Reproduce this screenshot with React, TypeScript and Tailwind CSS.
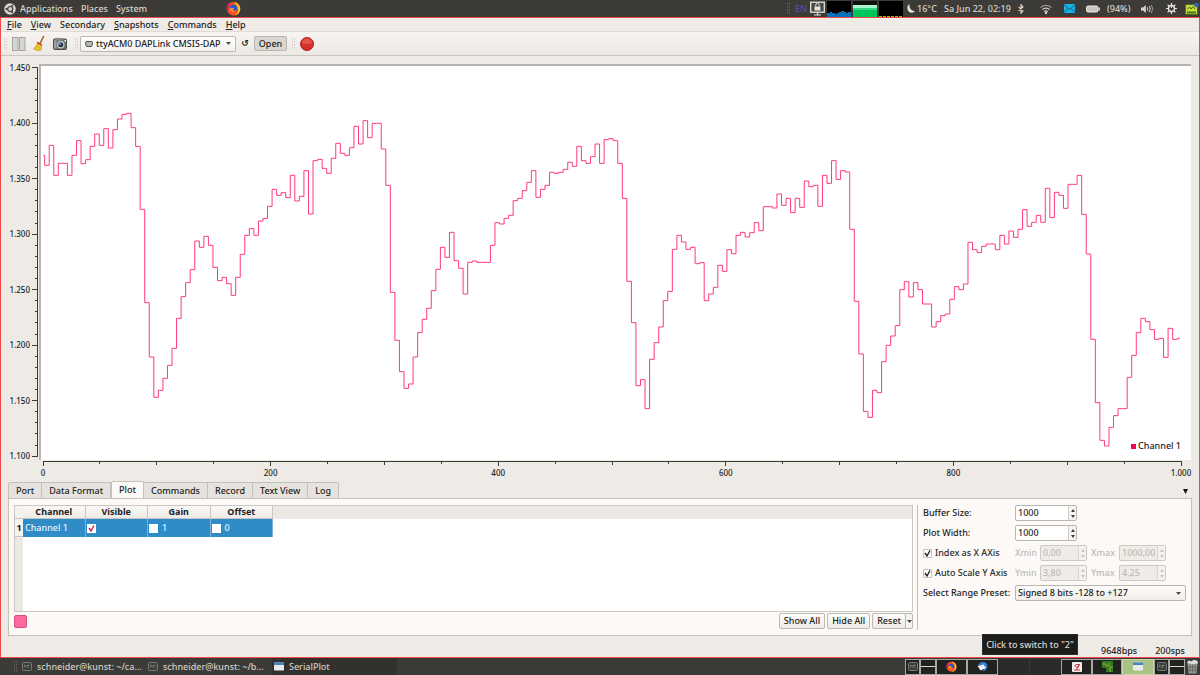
import type { ReactNode } from "react";

// Step levels of channel 1, four samples each, in plot units (y grows downwards).
const LEVELS = [
  286, 316, 256, 346, 310, 310, 346, 286, 242, 311, 299, 259, 222, 256, 206, 264, 209, 177, 163, 160,
  203, 259, 448, 728, 891, 1012, 991, 955, 916, 865, 775, 710, 668, 629, 543, 562, 529, 556, 622, 662,
  652, 671, 706, 652, 583, 526, 506, 526, 483, 475, 439, 388, 406, 398, 413, 346, 423, 409, 332, 462,
  302, 298, 325, 340, 295, 250, 280, 286, 263, 199, 252, 182, 233, 190, 190, 267, 376, 697, 841, 935,
  985, 972, 891, 818, 778, 745, 692, 628, 562, 592, 517, 602, 625, 702, 607, 603, 607, 607, 607, 556,
  488, 492, 475, 466, 422, 415, 392, 367, 332, 412, 388, 376, 337, 340, 337, 328, 307, 319, 259, 302,
  310, 290, 252, 310, 239, 236, 242, 310, 415, 664, 788, 977, 959, 1046, 898, 848, 801, 722, 694, 568,
  526, 546, 568, 562, 611, 608, 722, 702, 682, 616, 634, 569, 581, 526, 517, 531, 518, 488, 512, 440,
  440, 444, 402, 436, 415, 458, 415, 442, 363, 380, 376, 439, 346, 370, 302, 358, 332, 336, 508, 724,
  882, 1054, 1072, 991, 998, 905, 856, 828, 797, 689, 665, 711, 668, 689, 732, 732, 801, 785, 767, 762,
  718, 680, 689, 672, 547, 569, 578, 559, 552, 552, 569, 526, 552, 513, 532, 508, 449, 499, 487, 466,
  487, 385, 473, 397, 406, 445, 373, 373, 346, 463, 582, 838, 1028, 1141, 1158, 1102, 1067, 1046, 1046,
  952, 886, 818, 775, 785, 809, 838, 835, 892, 805, 838, 835,
];
const FIRST_STEP = 11;
const STEP = 13.645;

const tracePath = LEVELS.map((y, i) => {
  const from = i === 0 ? 7 : FIRST_STEP + (i - 1) * STEP;
  const to = i === LEVELS.length - 1 ? 3417 : FIRST_STEP + i * STEP;
  return `${i === 0 ? "M" : "L"}${from} ${y}L${to} ${y}`;
}).join("");

const Y_LABELS = ["1.450", "1.400", "1.350", "1.300", "1.250", "1.200", "1.150", "1.100"];
const X_LABELS = ["0", "200", "400", "600", "800", "1.000"];
const MENU = ["File", "View", "Secondary", "Snapshots", "Commands", "Help"];
const TABS = ["Port", "Data Format", "Plot", "Commands", "Record", "Text View", "Log"];

function Grip({ dark = false }: { dark?: boolean }) {
  return (
    <svg className="h-3 w-1 shrink-0" viewBox="0 0 4 12" fill={dark ? "#66655f" : "#cfccc7"}>
      {[0, 3, 6, 9].map((y) => (
        <g key={y}>
          <rect x="0" y={y} width="1" height="1.5" />
          <rect x="2" y={y} width="1" height="1.5" />
        </g>
      ))}
    </svg>
  );
}

function Firefox({ className }: { className: string }) {
  return (
    <svg className={className} viewBox="0 0 16 16">
      <circle cx="8" cy="8.3" r="7.2" fill="#ff4a28" />
      <path d="M8.5 0.8c4 1 6.800 4 6.700 7.800-.1 4-3.200 6.900-7 6.900 3-1 5-3.500 4.800-6.500-.2-3-2-5.200-4.500-8.200z" fill="#ffc41f" />
      <path d="M1 5.500C1.600 3.800 2.500 2.500 3.300 1.800c.2 1 .6 1.500 1.200 1.900l-2 8C1.300 10 .6 8 1 5.500z" fill="#e0216e" />
      <circle cx="7.900" cy="7.900" r="3.900" fill="#2358c9" />
      <path d="M4 7.500c1.500-.8 3 .1 4.500 0 .6.800-.6 1.500-1.400 1.800.8 1.300 2.400 1.200 3.900.7-1 2.700-5.800 2.600-7.200-.3z" fill="#ff8a1c" />
    </svg>
  );
}

function Terminal() {
  return (
    <svg className="h-[9px] w-[10px] shrink-0" viewBox="0 0 10 9">
      <rect x="0.500" y="0.500" width="9" height="8" rx="1" fill="#3a3f3d" stroke="#777a76" />
      <path d="M2 3l1.500 1L2 5M4.500 3.500h3M4.500 5h2" stroke="#8fa097" strokeWidth="0.700" fill="none" />
    </svg>
  );
}

function WindowIcon() {
  return (
    <svg className="h-[9px] w-[10px] shrink-0" viewBox="0 0 10 9">
      <rect x="0" y="0.500" width="10" height="8" rx="0.800" fill="#e9ebe8" />
      <rect x="0" y="0.500" width="10" height="2.500" fill="#4682c4" />
    </svg>
  );
}

function TopBar() {
  return (
    <header className="flex h-[17px] shrink-0 items-center bg-[#3c3b37] pl-1 text-[#d8d4cb]">
      <svg className="mr-1 h-3 w-3" viewBox="0 0 12 12">
        <circle cx="6" cy="6" r="5.800" fill="#d8d4cb" />
        <circle cx="6.200" cy="6" r="2.500" fill="none" stroke="#3c3b37" strokeWidth="1.200" />
        <circle cx="2.400" cy="6" r="1" fill="#3c3b37" />
        <circle cx="8.200" cy="2.700" r="1" fill="#3c3b37" />
        <circle cx="8.200" cy="9.300" r="1" fill="#3c3b37" />
      </svg>
      <nav className="flex w-[126px] gap-2">
        <a href="#applications">Applications</a>
        <a href="#places">Places</a>
        <a href="#system">System</a>
      </nav>
      <a href="#firefox" aria-label="Firefox" className="ml-20">
        <Firefox className="h-[15px] w-[15px]" />
      </a>
      <div className="ml-auto flex h-full items-center">
        <Grip dark />
        <span className="ml-1 w-3 text-[#4d52a8]">EN</span>
        <svg className="ml-[3px] h-[15px] w-[15px]" viewBox="0 0 15 15">
          <rect x="0.700" y="1.200" width="13.600" height="10" fill="#4a4945" stroke="#e6e3dc" strokeWidth="1.300" />
          <rect x="4.500" y="5.500" width="6" height="4" fill="#e6e3dc" />
          <path d="M5.700 5.500V4.200a1.800 1.800 0 013.600 0v1.300" stroke="#e6e3dc" fill="none" />
          <path d="M7.500 11v2.500M4 14h7" stroke="#e6e3dc" strokeWidth="1.200" />
        </svg>
        <svg className="ml-[2px] h-4 w-6" viewBox="0 0 24 16">
          <rect width="24" height="16" fill="#000" />
          <path d="M0 12h3v-1h2v1h3v1h2v-1h2v-1h2v-1h3v1h2v1h2v-1h3v5H0z" fill="#0a72b8" />
        </svg>
        <svg className="ml-[2px] h-4 w-6" viewBox="0 0 24 16">
          <rect width="24" height="16" fill="#10120f" />
          <rect y="4" width="24" height="3" fill="#a8f7cd" />
          <rect y="7" width="24" height="2" fill="#3bd885" />
          <rect y="9" width="24" height="7" fill="#00c45c" />
        </svg>
        <svg className="ml-[2px] h-4 w-6" viewBox="0 0 24 16">
          <rect width="24" height="16" fill="#000" />
          <path d="M0 15.500h24" stroke="#b5a800" strokeDasharray="3 1" />
        </svg>
        <svg className="ml-1 h-[9px] w-2" viewBox="0 0 8 9" fill="#e6e3dc">
          <path d="M2.500 0C0 1.200-.3 5 1.500 7.300 3.300 9.400 6.500 9.200 8 7 5.500 7.300 1.800 5 2.500 0z" />
        </svg>
        <span className="ml-[2px] w-[22px]">16°C</span>
        <span className="ml-[5px] w-[67px] whitespace-nowrap">Sa Jun 22, 02:19</span>
        <svg className="ml-[7px] h-[10px] w-[6px]" viewBox="0 0 6 10" fill="none" stroke="#d8d4cb" strokeWidth="1.100">
          <path d="M0.500 2.800L5 7 3 9.300V.7L5 3 .5 7.200" />
        </svg>
        <svg className="ml-4 h-[10px] w-3" viewBox="0 0 12 10" fill="none" stroke="#d8d4cb" strokeWidth="1.200">
          <path d="M0.600 3.700a7.500 7.500 0 0110.800 0" opacity="0.600" />
          <path d="M2.400 5.700a5 5 0 017.200 0M4.200 7.600a2.500 2.500 0 013.600 0" />
          <circle cx="6" cy="9" r="0.600" fill="#d8d4cb" />
        </svg>
        <svg className="ml-3 h-[9px] w-[11px]" viewBox="0 0 11 9">
          <rect width="11" height="9" fill="#19b1ea" />
          <path d="M0 .8l5.500 4.700L11 .8M0 8.500l4-4M11 8.500l-4-4" stroke="#23556e" fill="none" />
        </svg>
        <svg className="ml-[11px] h-2 w-[14px]" viewBox="0 0 14 8">
          <rect x="0.500" y="1" width="11.500" height="6" rx="1.500" fill="#c9c5bd" stroke="#efece5" />
          <rect x="12.500" y="2.500" width="1.500" height="3" fill="#d8d4cb" />
        </svg>
        <span className="ml-[7px] w-[26px]">(94%)</span>
        <svg className="ml-2 h-[10px] w-[13px]" viewBox="0 0 13 10" fill="none" stroke="#d8d4cb">
          <path d="M0 3.500h2L4.800 1v8L2 6.500H0z" fill="#d8d4cb" stroke="none" />
          <path d="M6.300 3.300q1 1.700 0 3.400M8.300 2q2 3 0 6" />
          <path d="M10.300 1q3 4 0 8" opacity="0.600" />
        </svg>
        <svg className="ml-3 h-[11px] w-[11px]" viewBox="0 0 11 11" fill="none" stroke="#e6e3dc">
          <circle cx="5.500" cy="5.500" r="3" strokeWidth="1.400" />
          <path d="M5.500 0v5M5.500 9v2M0 5.500h2.500M8.500 5.500H11M1.600 1.600l1.700 1.700M7.700 7.700l1.700 1.700M9.400 1.600L7.700 3.300M3.300 7.700L1.600 9.400" strokeWidth="1.200" />
        </svg>
        <svg className="mr-px ml-2 h-[13px] w-[14px]" viewBox="0 0 14 13">
          <rect x="0.500" y="2.500" width="12" height="10" rx="1" fill="#c5d93a" stroke="#4d6d1f" />
          <path d="M2 9.500h9v2H2z" fill="#3f7d22" />
          <path d="M2.500 7l2-2 1.500 2 2-2.500 2 2.500" stroke="#436b12" fill="none" />
          <circle cx="11.500" cy="3" r="2.300" fill="#2d65b5" />
        </svg>
      </div>
    </header>
  );
}

function MenuBar() {
  return (
    <nav className="flex h-[14px] shrink-0 items-center gap-[9px] border-b border-[#dedbd6] bg-[#efebe7] px-[6px]">
      {MENU.map((item) => (
        <button key={item} type="button" className="whitespace-nowrap">
          {item === "Secondary" ? item : <><span className="underline">{item[0]}</span>{item.slice(1)}</>}
        </button>
      ))}
    </nav>
  );
}

function Toolbar() {
  return (
    <div className="flex h-6 shrink-0 items-center border-b border-[#c9c5c0] bg-linear-to-b from-[#f7f4f1] to-[#ece8e4] pl-[3px]">
      <Grip />
      <button type="button" aria-label="Pause" className="ml-1">
        <svg className="h-[14px] w-[14px]" viewBox="0 0 14 14">
          <rect x="0.500" y="0.500" width="5.500" height="13" fill="#d3d6d2" stroke="#a3a5a1" />
          <rect x="7.500" y="0.500" width="5.500" height="13" fill="#d3d6d2" stroke="#a3a5a1" />
        </svg>
      </button>
      <button type="button" aria-label="Clear" className="ml-[7px]">
        <svg className="h-[15px] w-3" viewBox="0 0 12 15">
          <path d="M10.500 0.700L7.300 7" stroke="#9a6b25" strokeWidth="1.600" strokeLinecap="round" />
          <path d="M4.500 6l4.300 2.200-.8 5.800c-2 1-5.500.2-7.500-1.200C2.700 11.500 4 9 4.500 6z" fill="#f1cf3b" stroke="#b8911a" strokeWidth="0.700" />
          <path d="M4.500 6l4.300 2.200-.4 1.500L4 7.500z" fill="#c8423a" />
          <path d="M5 9.500L3 13M7 10l-1.500 3.800" stroke="#b8911a" strokeWidth="0.600" />
        </svg>
      </button>
      <button type="button" aria-label="Snapshot" className="ml-2">
        <svg className="h-3 w-[14px]" viewBox="0 0 14 12">
          <rect x="0.500" y="1" width="13" height="10.500" rx="1" fill="#6a6f70" stroke="#4a4e4f" />
          <rect x="2" y="0" width="8" height="2.500" fill="#85898a" />
          <rect x="1" y="2.500" width="2.500" height="8" fill="#9da1a2" />
          <circle cx="7.800" cy="6.800" r="3.700" fill="#c8cccd" />
          <circle cx="7.800" cy="6.800" r="2.500" fill="#26384a" />
          <circle cx="7" cy="6" r="0.900" fill="#8bb2d4" />
          <rect x="11.500" y="2" width="1.500" height="1.500" fill="#fff" />
        </svg>
      </button>
      <span className="ml-2 flex"><Grip /></span>
      <label className="ml-px flex h-4 w-[156px] items-center rounded-[2px] border border-[#bcb8b2] bg-linear-to-b from-white to-[#f3f1ee] pr-1 pl-1">
        <svg className="h-[6px] w-2 shrink-0" viewBox="0 0 8 6">
          <path d="M0.500 1.500Q.5.500 1.500.5h5q1 0 1 1L7 4.500q-.2 1-1 1H2q-.8 0-1-1z" fill="#b5b5b3" stroke="#4d4d4b" />
        </svg>
        <select aria-label="Serial port" className="ml-[3px] min-w-0 flex-1 appearance-none bg-transparent">
          <option>ttyACM0 DAPLink CMSIS-DAP</option>
        </select>
        <Arrow />
      </label>
      <button type="button" aria-label="Reload ports" className="ml-[5px] w-2 font-['DejaVu_Sans',sans-serif] leading-none font-bold">↺</button>
      <button type="button" className="ml-[5px] h-[15px] w-[33px] rounded-[2px] border border-[#b9b5b0] bg-[#dad7d3]">Open</button>
      <span className="ml-[5px] flex"><Grip /></span>
      <button type="button" aria-label="Record" className="ml-1">
        <svg className="h-[14px] w-[14px]" viewBox="0 0 14 14">
          <circle cx="7" cy="7" r="6.500" fill="#d5302c" stroke="#a92222" />
          <path d="M2 6a5 4.500 0 0110 0q-5 2-10 0z" fill="#e56460" opacity="0.700" />
        </svg>
      </button>
    </div>
  );
}

function Arrow() {
  return (
    <svg className="pointer-events-none h-[3px] w-[5px] shrink-0" viewBox="0 0 5 3">
      <path d="M0 0h5L2.500 3z" fill="#4a4a48" />
    </svg>
  );
}

function Plot() {
  return (
    <section className="flex min-h-0 flex-1 flex-col pt-2 pr-2 pl-2">
      <div className="flex min-h-0 flex-1">
        <div className="flex w-[21px] shrink-0 flex-col justify-between text-right text-[8px] leading-[8px]">
          {Y_LABELS.map((label) => <span key={label}>{label}</span>)}
        </div>
        <div className="ml-[2px] w-[7px] shrink-0 pt-[2px]">
          <svg className="block h-full w-full" viewBox="0 18 7 1182" preserveAspectRatio="none" stroke="#3b3a38" fill="none">
            <g shapeRendering="crispEdges">
              <path d="M5.500 23V1189" vectorEffect="non-scaling-stroke" />
              {Array.from({ length: 36 }, (_, i) => (
                <path key={i} d={`M${i % 5 === 0 ? 0 : 3} ${23 + i * 33.3}H5.500`} vectorEffect="non-scaling-stroke" />
              ))}
            </g>
          </svg>
        </div>
        <div className="grid min-w-0 flex-1 grid-cols-1 grid-rows-[minmax(0,1fr)] border-t-2 border-l-2 border-[#b9b4b0] bg-white">
          <svg className="col-start-1 row-start-1 h-full w-full" viewBox="0 18 3450 1182" preserveAspectRatio="none">
            <path d={tracePath} fill="none" stroke="#ff3a7b" strokeWidth="1" vectorEffect="non-scaling-stroke" />
          </svg>
          <div className="col-start-1 row-start-1 flex items-center gap-[2px] self-end justify-self-end pr-[10px] pb-2">
            <span className="h-[5px] w-[5px] bg-[#ff0055]" />
            <span>Channel 1</span>
          </div>
        </div>
      </div>
      <div className="mr-[10px] ml-[34px] pt-px">
        <svg className="block h-[5px] w-full overflow-visible" viewBox="0 0 1000 5" preserveAspectRatio="none" stroke="#3b3a38" fill="none">
          <g shapeRendering="crispEdges">
            <path d="M0 .5H1000" vectorEffect="non-scaling-stroke" />
            {Array.from({ length: 21 }, (_, i) => (
              <path key={i} d={`M${i * 50} 0V${i % 4 === 0 ? 5 : i % 2 === 0 ? 4 : 3}`} vectorEffect="non-scaling-stroke" />
            ))}
          </g>
        </svg>
        <div className="flex justify-between pt-[3px] text-[8px] leading-[8px]">
          {X_LABELS.map((label) => <span key={label} className="flex w-0 justify-center">{label}</span>)}
        </div>
      </div>
    </section>
  );
}

function TabBar() {
  return (
    <div className="flex shrink-0 items-end px-[7px] pt-1">
      <div role="tablist" className="flex items-end">
        {TABS.map((tab) =>
          tab === "Plot" ? (
            <button key={tab} role="tab" aria-selected="true" type="button" className="-mb-px h-[18px] rounded-t-[2px] border border-b-0 border-[#c4c0bb] bg-[#fcf9f6] px-[7px] pb-px">{tab}</button>
          ) : (
            <button key={tab} role="tab" aria-selected="false" type="button" className="h-4 border border-b-0 border-l-0 border-[#c4c0bb] bg-[#e6e3df] px-[7px] whitespace-nowrap first:rounded-tl-[2px] first:border-l last:rounded-tr-[2px]">{tab}</button>
          ),
        )}
      </div>
      <button type="button" aria-label="Hide panel" className="mr-1 mb-1 ml-auto">
        <svg className="h-[5px] w-[5px]" viewBox="0 0 5 5"><path d="M0 0h5L2.500 5z" fill="#111" /></svg>
      </button>
    </div>
  );
}

function CellCheck({ checked = false, label }: { checked?: boolean; label: string }) {
  return (
    <span className="grid h-[9px] w-[9px] shrink-0">
      <input type="checkbox" defaultChecked={checked} aria-label={label} className="peer col-start-1 row-start-1 h-[9px] w-[9px] appearance-none bg-white" />
      <svg className="pointer-events-none invisible col-start-1 row-start-1 h-[9px] w-[9px] peer-checked:visible" viewBox="0 0 9 9">
        <path d="M2 4l2 3 3-5.500" fill="none" stroke="#e5114f" strokeWidth="1.400" />
      </svg>
    </span>
  );
}

function ChannelTable() {
  const head = "h-[13px] border-r border-b border-[#c9c5c0] bg-linear-to-b from-[#faf8f6] to-[#eeebe7] p-0 text-center font-bold";
  const cell = "h-[18px] border-r border-[#7fb2d8] bg-[#308cc6] p-0 text-[#e9f4fb]";
  return (
    <div className="flex h-[107px] flex-col border border-[#cbc7c2] bg-white">
      <div className="bg-linear-to-b from-[#ece9e4] from-[13px] to-white to-[13px]">
        <table className="w-[258px] table-fixed border-separate border-spacing-0">
          <thead>
            <tr>
              <th className="w-2 border-b border-[#c9c5c0] bg-[#f4f2ef] p-0" />
              <th className={head}>Channel</th>
              <th className={head}>Visible</th>
              <th className={head}>Gain</th>
              <th className={head}>Offset</th>
            </tr>
          </thead>
          <tbody>
            <tr>
              <th scope="row" className="border-b border-[#c9c5c0] bg-[#f4f2ef] p-0 text-center font-bold text-[#111]">1</th>
              <td className={cell}><span className="pl-[2px]">Channel 1</span></td>
              <td className={cell}><div className="pl-px"><CellCheck checked label="Channel 1 visible" /></div></td>
              <td className={cell}><div className="flex items-center gap-1 pl-px"><CellCheck label="Use gain" />1</div></td>
              <td className={cell}><div className="flex items-center gap-1 pl-px"><CellCheck label="Use offset" />0</div></td>
            </tr>
          </tbody>
        </table>
      </div>
      <div className="w-2 flex-1 bg-[#ece9e4]" />
    </div>
  );
}

function SmallButton({ children }: { children: ReactNode }) {
  return (
    <button type="button" className="h-4 rounded-[2px] border border-[#bcb8b3] bg-linear-to-b from-[#fdfcfb] to-[#efece8] px-1 whitespace-nowrap">
      {children}
    </button>
  );
}

function Spin({ label, value, off = false, wide = false }: { label: string; value: string; off?: boolean; wide?: boolean }) {
  return (
    <span className={`flex h-4 shrink-0 overflow-hidden rounded-[2px] border ${wide ? "w-[62px]" : "w-[47px]"} ${off ? "border-[#cdc9c4] bg-[#efece8]" : "border-[#b9b5b0] bg-white"}`}>
      <input
        aria-label={label}
        defaultValue={value}
        disabled={off}
        className={`min-w-0 flex-1 bg-transparent pl-[2px] ${off ? "text-[#bdbab6]" : "text-[#2b2b2b]"}`}
      />
      <span className={`flex w-2 flex-col items-center justify-center gap-[3px] border-l ${off ? "border-[#d8d4d0] bg-[#f5f2ef] text-[#c9c6c2]" : "border-[#cdc9c4] bg-[#f7f5f2] text-[#3f3f3d]"}`}>
        <button type="button" disabled={off} aria-label={`${label} up`}>
          <svg className="block h-[3px] w-[4px]" viewBox="0 0 4 3"><path d="M0 3h4L2 0z" fill="currentColor" /></svg>
        </button>
        <button type="button" disabled={off} aria-label={`${label} down`}>
          <svg className="block h-[3px] w-[4px]" viewBox="0 0 4 3"><path d="M0 0h4L2 3z" fill="currentColor" /></svg>
        </button>
      </span>
    </span>
  );
}

function Option({ children }: { children: ReactNode }) {
  return (
    <label className="flex w-[92px] shrink-0 items-center gap-[3px] whitespace-nowrap">
      <span className="grid h-[9px] w-[9px] shrink-0">
        <input type="checkbox" defaultChecked className="peer col-start-1 row-start-1 h-[9px] w-[9px] appearance-none rounded-[1px] border border-[#c4c0bb] bg-white" />
        <svg className="pointer-events-none invisible col-start-1 row-start-1 h-[9px] w-[9px] peer-checked:visible" viewBox="0 0 9 9">
          <path d="M2 4l2 3 3-5.500" fill="none" stroke="#222" strokeWidth="1.400" />
        </svg>
      </span>
      {children}
    </label>
  );
}

function PlotPanel() {
  return (
    <div className="mx-[7px] flex h-[138px] shrink-0 border border-[#c4c0bb] bg-[#fcf9f6] px-[5px] pt-[6px] pb-[5px]">
      <div className="flex min-w-0 flex-1 flex-col gap-px">
        <ChannelTable />
        <div className="flex items-center gap-[2px]">
          <button type="button" aria-label="Channel colour" className="mr-auto h-[13px] w-[13px] rounded-[2px] border border-[#d94f82] bg-[#fb6a9e]" />
          <SmallButton>Show All</SmallButton>
          <SmallButton>Hide All</SmallButton>
          <span className="flex">
            <SmallButton>Reset</SmallButton>
            <button type="button" aria-label="Reset options" className="-ml-px flex h-4 w-2 items-center justify-center rounded-r-[2px] border border-[#bcb8b3] bg-[#f5f3f0]">
              <Arrow />
            </button>
          </span>
        </div>
      </div>
      <div className="ml-1 flex w-[269px] shrink-0 flex-col gap-1 border-l border-[#c4c0bb] pl-[5px]">
        <label className="flex items-center"><span className="w-[92px]">Buffer Size:</span><Spin wide label="Buffer Size" value="1000" /></label>
        <label className="flex items-center"><span className="w-[92px]">Plot Width:</span><Spin wide label="Plot Width" value="1000" /></label>
        <div className="flex items-center text-[#bdbab6]">
          <span className="text-[#2b2b2b]"><Option>Index as X AXis</Option></span>
          <span className="w-[25px]">Xmin</span><Spin off label="Xmin" value="0,00" />
          <span className="ml-1 w-7">Xmax</span><Spin off label="Xmax" value="1000,00" />
        </div>
        <div className="flex items-center text-[#bdbab6]">
          <span className="text-[#2b2b2b]"><Option>Auto Scale Y Axis</Option></span>
          <span className="w-[25px]">Ymin</span><Spin off label="Ymin" value="3,80" />
          <span className="ml-1 w-7">Ymax</span><Spin off label="Ymax" value="4,25" />
        </div>
        <label className="flex items-center whitespace-nowrap">
          <span className="w-[92px]">Select Range Preset:</span>
          <span className="flex h-4 w-[171px] items-center rounded-[2px] border border-[#b9b5b0] bg-linear-to-b from-[#fdfcfb] to-[#f0ede9] pr-1 pl-[2px]">
            <select className="min-w-0 flex-1 appearance-none bg-transparent">
              <option>Signed 8 bits -128 to +127</option>
            </select>
            <Arrow />
          </span>
        </label>
      </div>
    </div>
  );
}

function Workspace({ children, className }: { children?: ReactNode; className: string }) {
  return <div className={`flex h-4 shrink-0 items-center justify-center border ${className}`}>{children}</div>;
}

function TaskBar() {
  const shown = "border-[#a9a8a0] bg-[#222321]";
  return (
    <footer className="flex h-[17px] shrink-0 items-center bg-[#3c3b37] pl-[14px] text-[#cfccc4]">
      <Grip dark />
      <button type="button" className="ml-1 flex w-[126px] items-center gap-[5px] whitespace-nowrap"><Terminal />schneider@kunst: ~/ca…</button>
      <button type="button" className="flex w-[124px] items-center gap-[5px] whitespace-nowrap"><Terminal />schneider@kunst: ~/b…</button>
      <button type="button" className="flex h-full w-[125px] items-center gap-[5px] bg-[#32312e] pl-[2px]"><WindowIcon />SerialPlot</button>
      <div className="ml-auto flex items-center">
        <Workspace className={`w-[15px] ${shown}`}><Terminal /></Workspace>
        <Workspace className={`w-4 ${shown}`}><span className="h-px w-full bg-[#d8d7d0]" /></Workspace>
        <Workspace className={`w-[31px] ${shown}`}><Firefox className="h-[11px] w-[11px]" /></Workspace>
        <Workspace className={`w-[31px] ${shown}`}>
          <svg className="h-[11px] w-[11px]" viewBox="0 0 11 11">
            <path d="M1 4.500C2 1 7 0 9.500 2.500 12 6 9 10.500 5 10.500 8 9 8 5 5 4z" fill="#2f7fd6" />
            <path d="M.5 5l6-1.500L9 7l-5.500 2.500z" fill="#eef2f6" />
          </svg>
        </Workspace>
        <Workspace className="w-[31px] border-[#2b2b29] bg-[#2b2b29]" />
        <Workspace className="w-[32px] border-[#2b2b29] border-l-[#3c3b37] bg-[#2b2b29]" />
        <Workspace className={`w-[31px] ${shown}`}>
          <svg className="h-[10px] w-[10px]" viewBox="0 0 10 10">
            <rect width="10" height="10" rx="1" fill="#f2eeee" />
            <path d="M7.500 2.500H4.500Q2.500 2.500 3 4.500t3 0L7.500 2.500 4.500 8M2 8h6" stroke="#c9252d" strokeWidth="0.900" fill="none" />
          </svg>
        </Workspace>
        <Workspace className={`w-[30px] ${shown}`}>
          <svg className="h-[11px] w-[11px]" viewBox="0 0 11 11">
            <rect width="11" height="11" fill="#2f7d22" />
            <rect y="7" width="4" height="4" fill="#222321" />
            <path d="M0 3h4v2h3V2M8 11V6h3" stroke="#b8ac3c" strokeWidth="0.800" fill="none" />
          </svg>
        </Workspace>
        <Workspace className="w-[32px] border-[#c5d5ae] bg-[#a9c386]"><WindowIcon /></Workspace>
        <Workspace className={`w-[15px] ${shown}`}><Terminal /></Workspace>
        <Workspace className={`w-4 ${shown}`}><span className="h-px w-full bg-[#d8d7d0]" /></Workspace>
        <svg className="mr-px ml-px h-[15px] w-[13px]" viewBox="0 0 13 15">
          <path d="M1.500 4h10l-1 10.500h-8z" fill="#9c9d9b" />
          <path d="M4 5.500v8M6.500 5.500v8M9 5.500v8M2 8h9M2.200 11h8.600" stroke="#5d5e5c" strokeWidth="0.800" />
          <path d="M1 4l1.500-2.500 3 .8L8 .8 11.500 2 12 4.500 6.500 5z" fill="#dfe0de" />
        </svg>
      </div>
    </footer>
  );
}

export default function App() {
  return (
    <div className="flex h-screen min-h-[480px] flex-col bg-[#eeebe7] font-['Noto_Sans',sans-serif] text-[9px] leading-[12px] font-medium text-[#222]">
      <TopBar />
      <main className="flex min-h-0 flex-1 flex-col border border-[#f04848]">
        <MenuBar />
        <Toolbar />
        <Plot />
        <TabBar />
        <PlotPanel />
        <div className="relative flex h-[21px] shrink-0 items-end justify-end gap-[18px] pr-[14px]">
          <span>9648bps</span>
          <span>200sps</span>
          <div role="tooltip" className="absolute right-[121px] bottom-[2px] flex h-[21px] w-[96px] items-center justify-center border border-[#2c2c2a] bg-[#1c1c1b] whitespace-nowrap text-[#dcdad5]">
            Click to switch to "2"
          </div>
        </div>
      </main>
      <TaskBar />
    </div>
  );
}
